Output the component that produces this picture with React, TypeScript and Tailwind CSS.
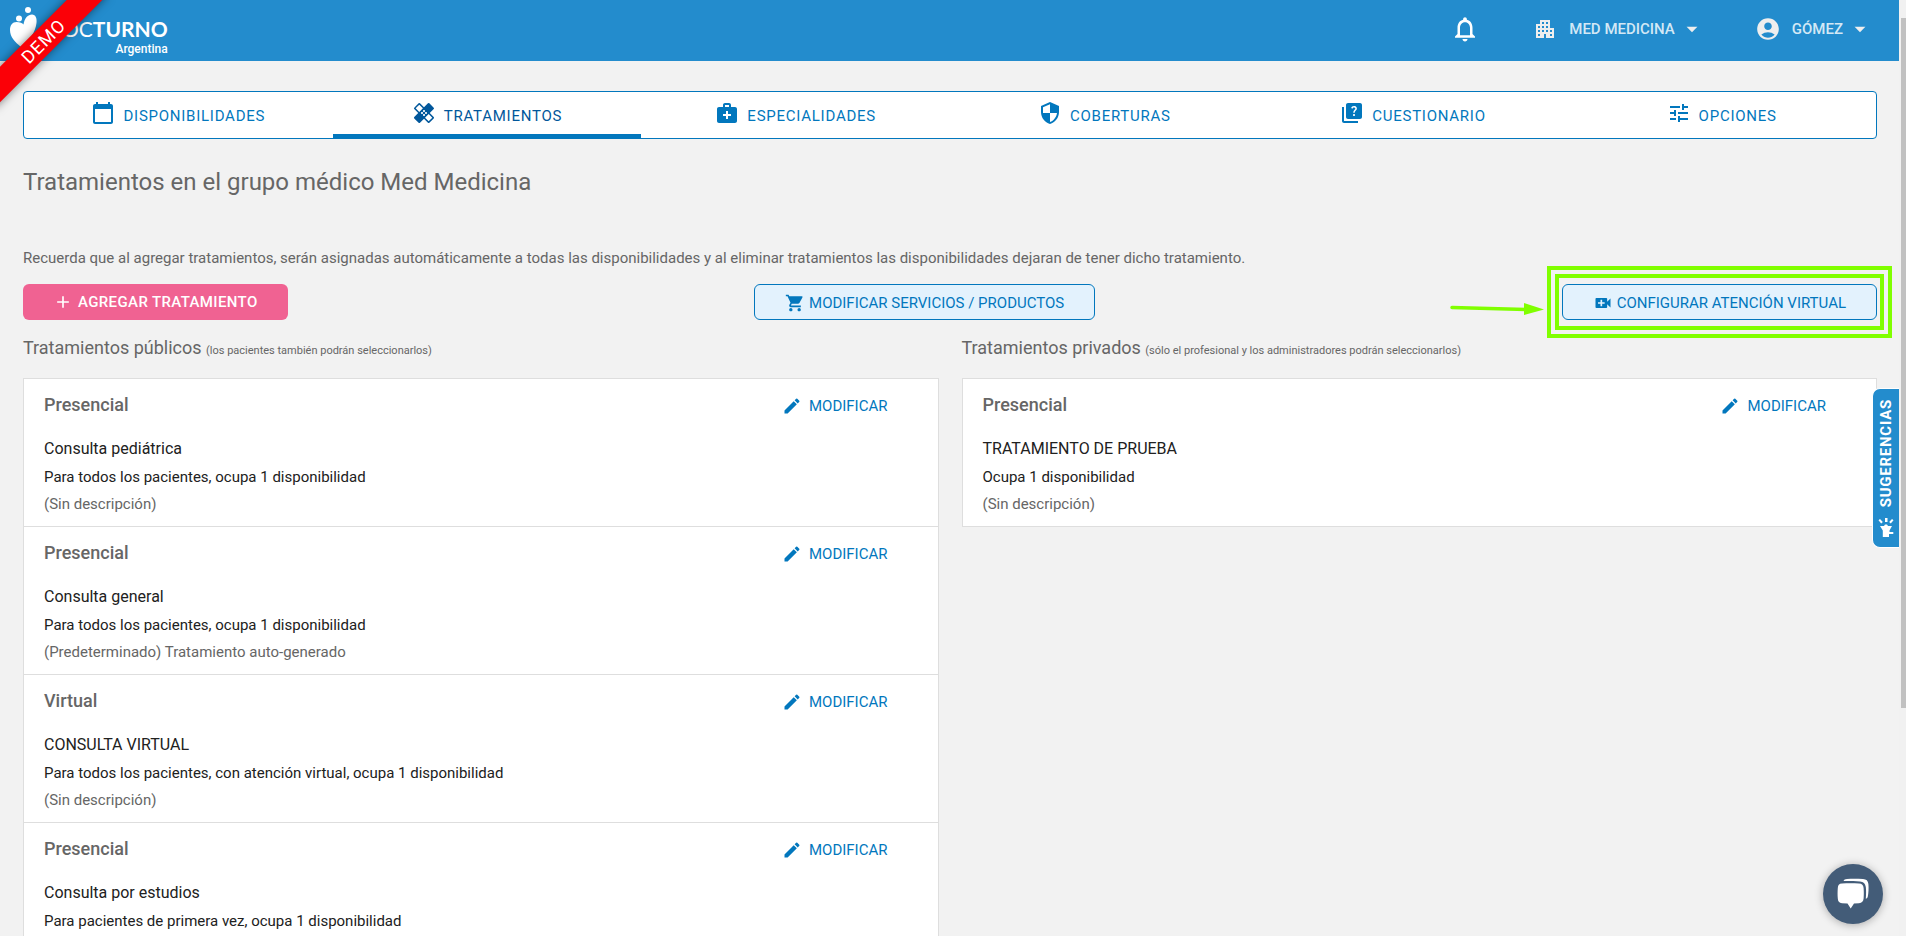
import React from 'react';
import {
  MdAccountCircle,
  MdAdd,
  MdApartment,
  MdArrowDropDown,
  MdCalendarToday,
  MdEdit,
  MdHealing,
  MdMedicalServices,
  MdNotificationsNone,
  MdQuiz,
  MdSecurity,
  MdShoppingCart,
  MdTune,
  MdVideoCall,
} from 'react-icons/md';
import type { IconType } from 'react-icons';

type Treatment = {
  mode: string;
  name: string;
  detail: string;
  description?: string;
};

const tabs: { label: string; icon: IconType; active?: boolean }[] = [
  { label: 'DISPONIBILIDADES', icon: MdCalendarToday },
  { label: 'TRATAMIENTOS', icon: MdHealing, active: true },
  { label: 'ESPECIALIDADES', icon: MdMedicalServices },
  { label: 'COBERTURAS', icon: MdSecurity },
  { label: 'CUESTIONARIO', icon: MdQuiz },
  { label: 'OPCIONES', icon: MdTune },
];

const publicTreatments: Treatment[] = [
  {
    mode: 'Presencial',
    name: 'Consulta pediátrica',
    detail: 'Para todos los pacientes, ocupa 1 disponibilidad',
    description: '(Sin descripción)',
  },
  {
    mode: 'Presencial',
    name: 'Consulta general',
    detail: 'Para todos los pacientes, ocupa 1 disponibilidad',
    description: '(Predeterminado) Tratamiento auto-generado',
  },
  {
    mode: 'Virtual',
    name: 'CONSULTA VIRTUAL',
    detail: 'Para todos los pacientes, con atención virtual, ocupa 1 disponibilidad',
    description: '(Sin descripción)',
  },
  {
    mode: 'Presencial',
    name: 'Consulta por estudios',
    detail: 'Para pacientes de primera vez, ocupa 1 disponibilidad',
  },
];

const privateTreatments: Treatment[] = [
  {
    mode: 'Presencial',
    name: 'TRATAMIENTO DE PRUEBA',
    detail: 'Ocupa 1 disponibilidad',
    description: '(Sin descripción)',
  },
];

function Logo() {
  return (
    <a href="#" className="flex items-start gap-2 text-white">
      <svg viewBox="0 0 28 42" className="h-[42px] w-7" fill="currentColor" aria-hidden="true">
        <circle cx="18" cy="4" r="3" />
        <circle cx="9" cy="12.500" r="3" />
        <path d="M13.500 18.500C14.500 12 18 8.500 22 8.500C25.500 8.500 27 12 26.500 17C25.500 26 20 34 11 41C5 36 0 31 0 24C0 19 2.500 16 6.500 16C10 16 12.500 17 13.500 18.500Z" />
      </svg>
      <span className="flex flex-col items-end pt-[11px]">
        <span className="font-['Lato',sans-serif] text-[21px] leading-6">
          DOC<b className="font-bold">TURNO</b>
        </span>
        <span className="text-xs leading-[17px] font-medium">Argentina</span>
      </span>
    </a>
  );
}

function DemoRibbon() {
  return (
    <div className="pointer-events-none absolute top-0 left-0 z-10 size-32 overflow-hidden">
      <div className="absolute top-[30px] -left-[38px] flex h-[25px] w-40 -rotate-45 items-center justify-center bg-[#fb0007] pt-px pl-1 text-lg tracking-wider text-white shadow-[0_0_10px_rgba(0,0,0,0.5)]">
        DEMO
      </div>
    </div>
  );
}

function TopBar() {
  return (
    <header className="flex h-[61px] shrink-0 items-start justify-between bg-[#238ccd] pr-[26px] pl-[10px]">
      <div className="pt-[6px]">
        <Logo />
      </div>
      <nav className="flex h-[58px] items-center text-[15px] font-medium text-[#d3e8f5]">
        <button type="button" aria-label="Notificaciones" className="mr-[53px] text-white">
          <MdNotificationsNone className="size-[30px]" />
        </button>
        <button type="button" className="mr-[50px] flex items-center">
          <MdApartment className="mr-3 size-6 text-[#eeeeee]" />
          MED MEDICINA
          <MdArrowDropDown className="ml-1 size-[26px] text-[#eeeeee]" />
        </button>
        <button type="button" className="flex items-center">
          <MdAccountCircle className="mr-[11px] size-[26px] text-[#eeeeee]" />
          GÓMEZ
          <MdArrowDropDown className="ml-1 size-[26px] text-[#eeeeee]" />
        </button>
      </nav>
    </header>
  );
}

function Tabs() {
  return (
    <nav className="grid h-12 grid-cols-6 rounded border border-[#0277bd] bg-white">
      {tabs.map(({ label, icon: Icon, active }) => (
        <a
          key={label}
          href="#"
          aria-current={active ? 'page' : undefined}
          className={
            active
              ? 'flex items-center justify-center gap-2 border-b-4 border-[#0277bd] text-[15px] tracking-wider text-[#01579b]'
              : 'flex items-center justify-center gap-2 border-b-4 border-transparent text-[15px] tracking-wider text-[#0277bd]'
          }
        >
          <Icon className="size-6" />
          <span className="pt-1.5">{label}</span>
        </a>
      ))}
    </nav>
  );
}

function TreatmentList({ items }: { items: Treatment[] }) {
  return (
    <ul className="border-x border-t border-[#dedede] bg-white">
      {items.map((item) => (
        <li key={item.name} className="min-h-[148px] border-b border-[#dedede] pt-[14px] pr-[50px] pl-5">
          <div className="flex h-6 items-center justify-between">
            <h3 className="text-lg leading-6 font-medium text-[#666666]">{item.mode}</h3>
            <button type="button" className="flex items-center gap-[7px] pt-0.5 text-[15px] text-[#0277bd]">
              <MdEdit className="size-5" />
              MODIFICAR
            </button>
          </div>
          <p className="mt-5 text-base leading-6 text-[#212121]">{item.name}</p>
          <p className="mt-1 text-[15px] leading-6 text-[#212121]">{item.detail}</p>
          {item.description && (
            <p className="mt-[3px] text-[15px] leading-6 text-[#666666]">{item.description}</p>
          )}
        </li>
      ))}
    </ul>
  );
}

function TreatmentSection({ title, note, items }: { title: string; note: string; items: Treatment[] }) {
  return (
    <section>
      <h2 className="mb-[18px] text-lg leading-6 text-[#666666]">
        {title} <small className="text-[11px] leading-none">{note}</small>
      </h2>
      <TreatmentList items={items} />
    </section>
  );
}

function Highlight() {
  return (
    <>
      <span className="pointer-events-none absolute -inset-x-[7px] -inset-y-[10px] border-4 border-[#80ff00]" />
      <span className="pointer-events-none absolute -inset-x-[15px] -inset-y-[18px] border-4 border-[#80ff00]" />
      <svg
        viewBox="0 0 94 14"
        className="pointer-events-none absolute top-[18px] right-full mr-[18px] h-[14px] w-[94px]"
        aria-hidden="true"
      >
        <path d="M2 5.500L76 7.500" stroke="#80ff00" strokeWidth="3.500" strokeLinecap="round" />
        <path d="M74 1L94 7.500L74 13Z" fill="#80ff00" />
      </svg>
    </>
  );
}

function Actions() {
  return (
    <div className="flex items-center justify-between text-[15px]">
      <button
        type="button"
        className="flex h-9 items-center gap-[5px] rounded-md bg-[#f06292] px-[30px] font-medium tracking-wide text-white"
      >
        <MdAdd className="size-5" />
        AGREGAR TRATAMIENTO
      </button>
      <button
        type="button"
        className="flex h-9 items-center gap-1 rounded-md border border-[#0277bd] bg-[#e3f2fd] px-[30px] pt-0.5 text-[#0277bd]"
      >
        <MdShoppingCart className="size-5" />
        MODIFICAR SERVICIOS / PRODUCTOS
      </button>
      <div className="relative">
        <button
          type="button"
          className="flex h-9 items-center gap-1 rounded-md border border-[#0277bd] bg-[#e3f2fd] px-[30px] pt-0.5 text-[#0277bd]"
        >
          <MdVideoCall className="size-5" />
          CONFIGURAR ATENCIÓN VIRTUAL
        </button>
        <Highlight />
      </div>
    </div>
  );
}

function SuggestionsTab() {
  return (
    <button
      type="button"
      className="absolute top-[388px] right-0 flex w-[27px] flex-col items-center gap-[11px] rounded-l-lg border border-r-0 border-white bg-[#238ccd] py-2.5 text-[15px] font-bold tracking-wider text-white"
    >
      <span className="rotate-180 leading-5 [writing-mode:vertical-rl]">SUGERENCIAS</span>
      <svg viewBox="0 0 16 19" className="h-[19px] w-4" fill="currentColor" aria-hidden="true">
        <path d="M7 0H9.500V4H7Z" />
        <path d="M.5 2.300L2 1L4.800 4L3.200 5.500Z" />
        <path d="M15.500 2.300L14 1L11.200 4L12.800 5.500Z" />
        <path d="M2 8H6L7 6.500H9L10 8H14L11.500 12.500V14H15.300V16H11V19H4.800V12.500Z" />
      </svg>
    </button>
  );
}

function ChatButton() {
  return (
    <button
      type="button"
      aria-label="Abrir chat"
      className="absolute right-4 bottom-3 flex size-[60px] items-center justify-center rounded-full bg-[#435c78] shadow-[0_1px_8px_rgba(0,0,0,0.3)]"
    >
      <svg viewBox="0 0 32 32" className="size-8" fill="#ffffff" aria-hidden="true">
        <path d="M5 5.500C2 5.700 1 7 .8 10C.5 14 .5 17 .8 20.500C1 23.500 2 24.800 5 25.200L10.500 25.500L13.700 30.500L17 25.500L22 25.200C25 24.900 26.300 23.500 26.600 20.500C26.900 17 26.900 14 26.600 10C26.300 7 25 5.700 22 5.500C16 5 11 5 5 5.500Z" />
        <path d="M6.500 3C7 1.500 8 1 10 .9C15 .6 20 .6 26 1C29.500 1.200 31 2.800 31.400 6C31.800 10 31.500 15 30.800 18.500C30.500 20 29.800 20.500 28.800 20.800C29.200 16 29.200 12 28.800 9C28.300 5.500 26.500 3.800 23 3.500C17 3 12 2.900 6.500 3Z" />
      </svg>
    </button>
  );
}

export default function App() {
  return (
    <div className="flex h-screen overflow-hidden bg-[#f2f2f2] font-['Roboto',sans-serif]">
      <div className="relative flex min-w-0 flex-1 flex-col overflow-hidden">
        <TopBar />
        <DemoRibbon />
        <main className="min-h-0 flex-1 overflow-hidden pt-[30px] pr-[22px] pl-[23px]">
          <Tabs />
          <h1 className="mt-[27px] text-2xl leading-8 text-[#666666]">Tratamientos en el grupo médico Med Medicina</h1>
          <p className="mt-12 mb-[14px] text-[15px] leading-6 text-[#666666]">
            Recuerda que al agregar tratamientos, serán asignadas automáticamente a todas las disponibilidades y al
            eliminar tratamientos las disponibilidades dejaran de tener dicho tratamiento.
          </p>
          <Actions />
          <div className="mt-4 grid grid-cols-2 items-start gap-[23px]">
            <TreatmentSection
              title="Tratamientos públicos"
              note="(los pacientes también podrán seleccionarlos)"
              items={publicTreatments}
            />
            <TreatmentSection
              title="Tratamientos privados"
              note="(sólo el profesional y los administradores podrán seleccionarlos)"
              items={privateTreatments}
            />
          </div>
        </main>
        <SuggestionsTab />
        <ChatButton />
      </div>
      <div className="flex w-[7px] shrink-0 flex-col items-end bg-[#f1f1f1] pt-[18px]" aria-hidden="true">
        <div className="h-[690px] w-[5px] bg-[#c1c1c1]" />
      </div>
    </div>
  );
}
